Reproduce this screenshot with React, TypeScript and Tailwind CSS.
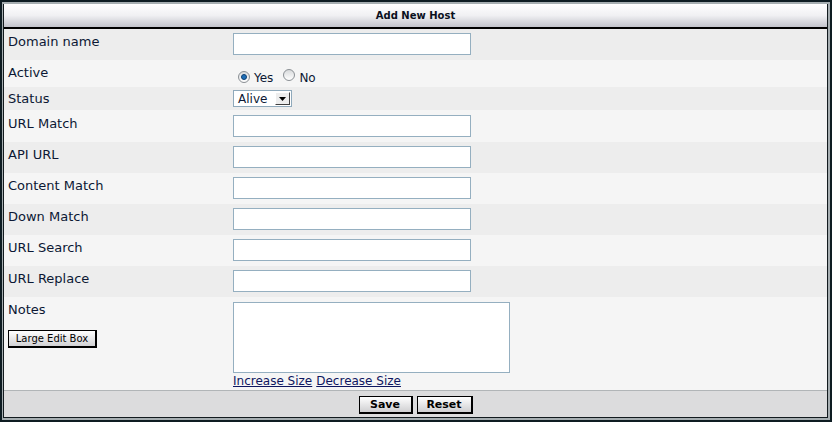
import React from "react";

const font = { fontFamily: '"DejaVu Sans", Verdana, sans-serif' };

function TextInput() {
  return <div className="w-[238px] h-[22px] bg-white border border-[#95afc0]" />;
}

function Radio({ checked }: { checked?: boolean }) {
  return (
    <span className="inline-flex items-center justify-center w-[12px] h-[12px] rounded-full border border-[#8a8f94] bg-gradient-to-b from-[#d8dadc] to-[#ffffff]">
      {checked ? (
        <span className="w-[6px] h-[6px] rounded-full bg-[#1e6fb8] border border-[#0d3f73]" />
      ) : null}
    </span>
  );
}

function Row({
  label,
  bg,
  h,
  labelPt,
  inputPt,
  children,
}: {
  label: string;
  bg: string;
  h: string;
  labelPt: string;
  inputPt: string;
  children: React.ReactNode;
}) {
  return (
    <div className={`flex ${bg} ${h}`}>
      <div className={`w-[229px] pl-[4px] ${labelPt} text-[13px] leading-[16px] text-[#0c1834]`}>{label}</div>
      <div className={`flex-1 ${inputPt}`}>{children}</div>
    </div>
  );
}

export default function App() {
  return (
    <div className="w-[832px] h-[422px] bg-[#0e1c22] p-[2px]" style={font}>
      <div className="w-full h-full bg-[#a6aeb1] pt-[2px] pr-[2px] pb-[2px] pl-[1px]">
        <div className="w-full h-full border-l border-r border-b border-[#121a1e] flex flex-col">
          {/* Header */}
          <div className="h-[25px] flex items-center justify-center bg-gradient-to-b from-[#ffffff] via-[#f0f0f3] to-[#c3c4cc] border-b-2 border-[#000]">
            <span className="text-[10px] font-bold text-[#0a1020] leading-[14px] pt-[1px]">Add New Host</span>
          </div>

          <Row label="Domain name" bg="bg-[#ededed]" h="h-[31px]" labelPt="pt-[5px]" inputPt="pt-[4px]">
            <TextInput />
          </Row>
          <Row label="Active" bg="bg-[#f5f5f5]" h="h-[27px]" labelPt="pt-[5px]" inputPt="pt-[8px]">
            <div className="flex items-center pl-[5px] text-[12px] leading-[14px] text-[#0c1834]">
              <Radio checked />
              <span className="ml-[4px] mt-[3px]">Yes</span>
              <span className="ml-[10px]"><Radio /></span>
              <span className="ml-[4px] mt-[3px]">No</span>
            </div>
          </Row>
          <Row label="Status" bg="bg-[#ededed]" h="h-[23px]" labelPt="pt-[4px]" inputPt="pt-[3px]">
            <div className="w-[59px] h-[17px] bg-white border border-[#8fa9bb] flex items-center">
              <span className="pl-[4px] text-[12px] leading-[14px] text-[#0c1834] flex-1">Alive</span>
              <span className="w-[15px] h-[13px] mr-[1px] bg-[#ededed] border-t border-l border-t-[#ffffff] border-l-[#ffffff] border-b border-r border-b-[#404040] border-r-[#404040] flex items-center justify-center">
                <svg width="7" height="4" viewBox="0 0 7 4">
                  <path d="M0 0h7L3.5 4z" fill="#000" />
                </svg>
              </span>
            </div>
          </Row>
          <Row label="URL Match" bg="bg-[#f5f5f5]" h="h-[32px]" labelPt="pt-[6px]" inputPt="pt-[5px]">
            <TextInput />
          </Row>
          <Row label="API URL" bg="bg-[#ededed]" h="h-[31px]" labelPt="pt-[5px]" inputPt="pt-[4px]">
            <TextInput />
          </Row>
          <Row label="Content Match" bg="bg-[#f5f5f5]" h="h-[31px]" labelPt="pt-[5px]" inputPt="pt-[4px]">
            <TextInput />
          </Row>
          <Row label="Down Match" bg="bg-[#ededed]" h="h-[31px]" labelPt="pt-[5px]" inputPt="pt-[4px]">
            <TextInput />
          </Row>
          <Row label="URL Search" bg="bg-[#f5f5f5]" h="h-[31px]" labelPt="pt-[5px]" inputPt="pt-[4px]">
            <TextInput />
          </Row>
          <Row label="URL Replace" bg="bg-[#ededed]" h="h-[31px]" labelPt="pt-[5px]" inputPt="pt-[4px]">
            <TextInput />
          </Row>

          {/* Notes */}
          <div className="flex bg-[#f5f5f5] h-[93px]">
            <div className="w-[229px] pl-[4px] pt-[5px] text-[13px] leading-[16px] text-[#0c1834]">
              <div>Notes</div>
              <button className="mt-[12px] w-[89px] h-[18px] text-[10px] leading-[13px] text-[#000] bg-gradient-to-b from-[#ffffff] to-[#d2d2d4] border border-[#000] border-r-2 border-b-2 flex items-center justify-center">
                Large Edit Box
              </button>
            </div>
            <div className="flex-1 pt-[5px]">
              <div className="w-[277px] h-[71px] bg-white border border-[#95afc0]" />
              <div className="mt-[1px] text-[12px] leading-[14px] text-[#0e1660] flex gap-[4px]">
                <span className="underline">Increase Size</span>
                <span className="underline">Decrease Size</span>
              </div>
            </div>
          </div>

          {/* Footer */}
          <div className="flex-1 bg-[#dcdcdd] border-t border-[#b1b5b7] flex justify-center items-start pt-[5px] gap-[4px]">
            <button className="w-[54px] h-[18px] text-[11px] font-bold leading-[13px] text-[#000] bg-gradient-to-b from-[#ffffff] to-[#cfcfd1] border border-[#000] border-r-2 border-b-2 flex items-center justify-center">
              Save
            </button>
            <button className="w-[56px] h-[18px] text-[11px] font-bold leading-[13px] text-[#000] bg-gradient-to-b from-[#ffffff] to-[#cfcfd1] border border-[#000] border-r-2 border-b-2 flex items-center justify-center">
              Reset
            </button>
          </div>
        </div>
      </div>
    </div>
  );
}
